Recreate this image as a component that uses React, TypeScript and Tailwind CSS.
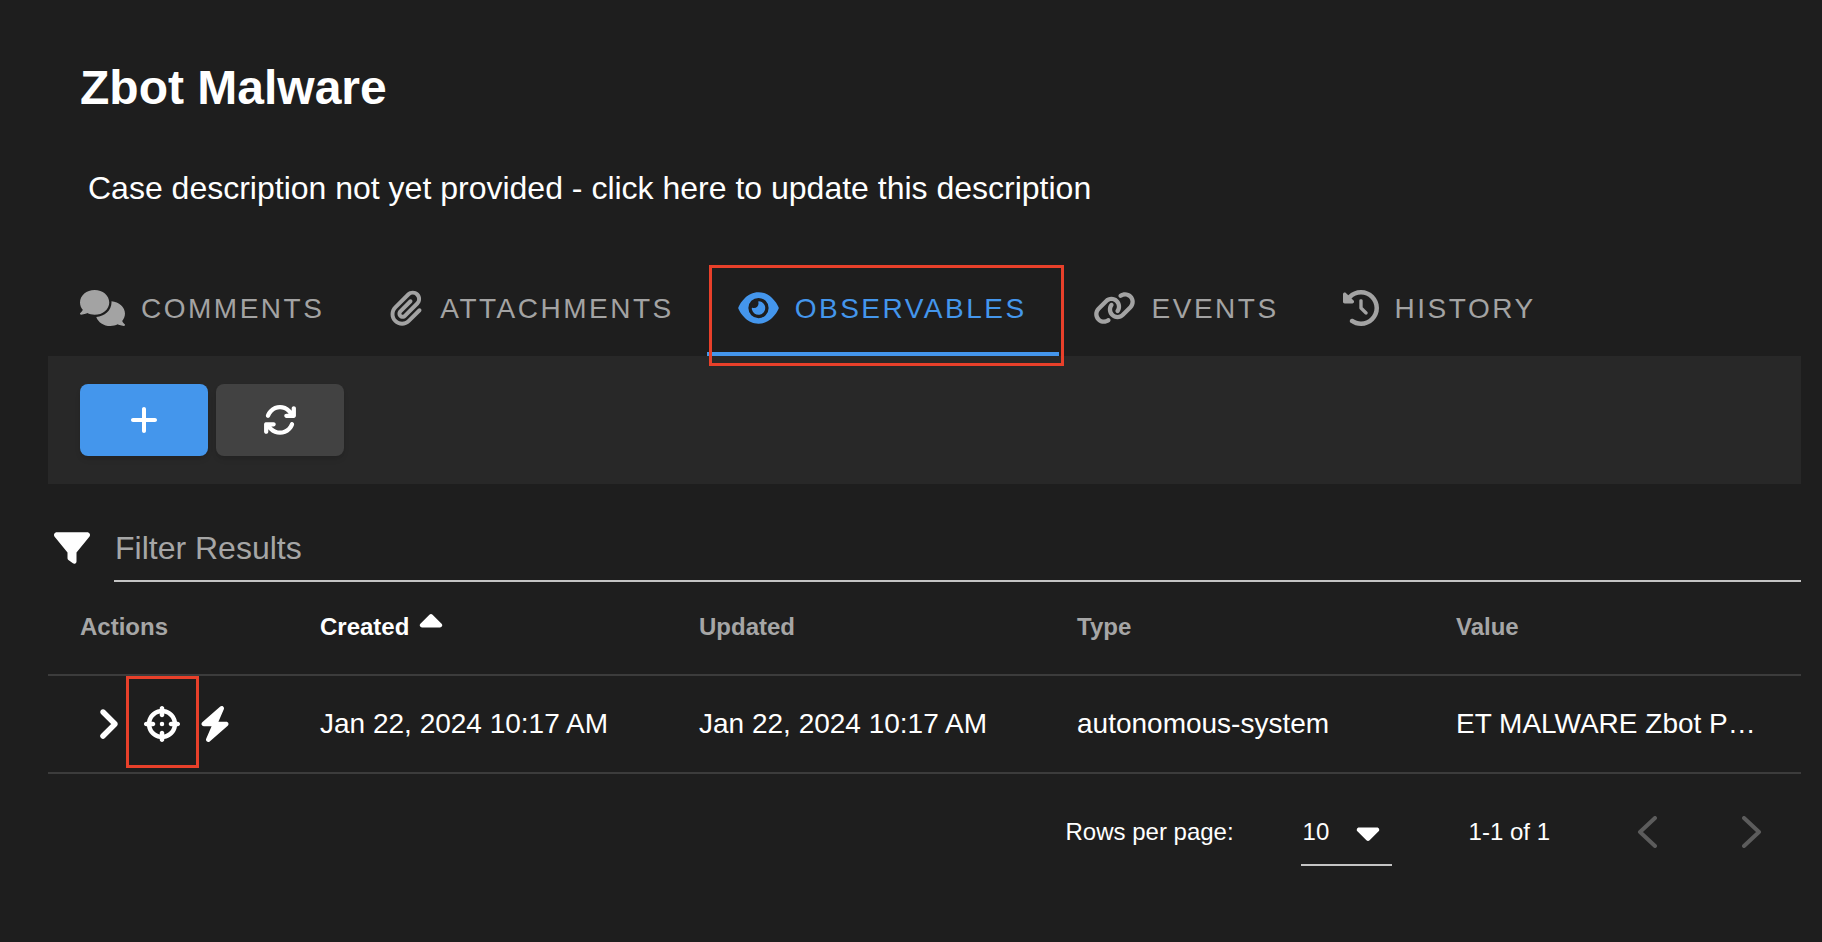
import { FaArrowsRotate, FaBolt, FaCaretDown, FaCaretUp, FaChevronRight, FaClockRotateLeft, FaComments, FaCrosshairs, FaEye, FaFilter, FaLink, FaPaperclip, FaPlus } from 'react-icons/fa6'

const tabs = [
    { label: 'COMMENTS', icon: <FaComments className="w-[45px] h-[40px]" /> },
    { label: 'ATTACHMENTS', icon: <FaPaperclip className="w-[36px] h-[36px]" /> },
    { label: 'OBSERVABLES', icon: <FaEye className="w-[41px] h-[36px]" />, active: true },
    { label: 'EVENTS', icon: <FaLink className="ml-[2px] w-[43px] h-[36px]" /> },
    { label: 'HISTORY', icon: <FaClockRotateLeft className="w-[36px] h-[36px]" /> },
]

const columns = ['Actions', 'Created', 'Updated', 'Type', 'Value']

const gridCols = 'grid grid-cols-[240px_379px_378px_379px_1fr] items-center pl-8'

const App = () => {
    return (
        <div className="h-[942px] overflow-hidden bg-[#1e1e1e] text-white font-['Liberation_Sans',Arial,sans-serif]">
            {/* Heading */}
            <h1 className="pt-[60px] pl-[80px] text-[48px] leading-[56px] font-bold">Zbot Malware</h1>
            <p className="mt-[52px] pl-[88px] text-[32px] leading-[40px]">
                Case description not yet provided - click here to update this description
            </p>

            <div className="mt-[52px] ml-[48px] mr-[21px]">
                {/* Tabs */}
                <div className="flex h-[96px]">
                    {tabs.map((tab) => (
                        <div
                            key={tab.label}
                            className={`relative flex items-center gap-[16px] px-8 text-[28px] tracking-[2.5px] ${tab.active ? 'text-[#4496ec]' : 'text-[#a3a3a3]'}`}
                        >
                            {tab.icon}
                            <span className="pt-[2px]">{tab.label}</span>
                            {tab.active && (
                                <>
                                    <div className="absolute left-px right-0 bottom-0 h-[4px] bg-[#4496ec]" />
                                    <div className="absolute left-[3px] -right-[5px] top-[5px] -bottom-[10px] border-[3px] border-[#e8402a]" />
                                </>
                            )}
                        </div>
                    ))}
                </div>

                {/* Toolbar */}
                <div className="flex gap-2 h-[128px] pt-[28px] pl-8 bg-[#282828]">
                    <button className="flex items-center justify-center w-[128px] h-[72px] rounded-lg bg-[#4496ec] shadow-md">
                        <FaPlus className="w-[32px] h-[32px]" />
                    </button>
                    <button className="flex items-center justify-center w-[128px] h-[72px] rounded-lg bg-[#424242] shadow-md">
                        <FaArrowsRotate className="w-[34px] h-[34px]" />
                    </button>
                </div>

                {/* Filter */}
                <div className="flex items-end mt-[38px] pl-[6px]">
                    <FaFilter className="w-[36px] h-[36px] mb-[16px] shrink-0" />
                    <div className="flex-1 ml-[24px] h-[60px] pl-px pt-[6px] border-b-2 border-[#c4c4c4] text-[32px] leading-[40px] text-[#a6a6a6]">
                        Filter Results
                    </div>
                </div>

                {/* Table */}
                <div className={`${gridCols} h-[94px] pb-[2px] border-b-2 border-[#3c3c3c] text-[24px] font-bold text-[#a6a6a6]`}>
                    {columns.map((col) => (
                        <div key={col} className={`flex items-center ${col === 'Created' ? 'text-white' : ''}`}>
                            {col}
                            {col === 'Created' && <FaCaretUp className="w-[36px] h-[36px] ml-[4px] -mt-[9px]" />}
                        </div>
                    ))}
                </div>
                <div className={`${gridCols} h-[98px] border-b-2 border-[#3c3c3c] text-[28px]`}>
                    <div className="flex items-center pl-[12px] -ml-px">
                        <FaChevronRight className="w-[32px] h-[32px]" stroke="currentColor" strokeWidth={24} />
                        <div className="relative ml-[21px]">
                            <FaCrosshairs className="w-[36px] h-[36px]" />
                            <div className="absolute -left-[18px] -right-[19px] -top-[30px] -bottom-[26px] border-[3px] border-[#e8402a]" />
                        </div>
                        <FaBolt className="w-[36px] h-[36px] ml-[17px]" />
                    </div>
                    <div>Jan 22, 2024 10:17 AM</div>
                    <div>Jan 22, 2024 10:17 AM</div>
                    <div>autonomous-system</div>
                    <div className="whitespace-nowrap">ET MALWARE Zbot P…</div>
                </div>

                {/* Pagination */}
                <div className="flex items-center justify-end h-[116px] pr-[39px] text-[24px]">
                    <span>Rows per page:</span>
                    <div className="flex items-center ml-[67px] w-[91px] h-[68px] pl-[2px] pt-px border-b-2 border-[#c4c4c4]">
                        <span>10</span>
                        <FaCaretDown className="w-[36px] h-[36px] ml-[21px]" />
                    </div>
                    <span className="ml-[77px]">1-1 of 1</span>
                    <svg className="ml-[87px] w-[20px] h-[32px]" viewBox="0 0 20 32" fill="none" stroke="#5c5c5c" strokeWidth="4" strokeLinecap="round" strokeLinejoin="round">
                        <path d="M18 2 3 16l15 14" />
                    </svg>
                    <svg className="ml-[85px] w-[20px] h-[32px]" viewBox="0 0 20 32" fill="none" stroke="#5c5c5c" strokeWidth="4" strokeLinecap="round" strokeLinejoin="round">
                        <path d="M2 2l15 14L2 30" />
                    </svg>
                </div>
            </div>
        </div>
    )
}

export default App
